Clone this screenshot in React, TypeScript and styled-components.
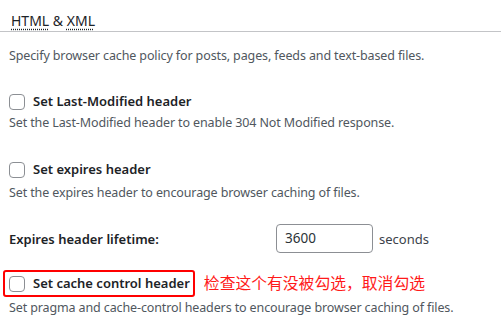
import React from "react";
import styled, { createGlobalStyle } from "styled-components";

const Global = createGlobalStyle`
  html, body { margin: 0; padding: 0; background: #fff; }
  body { font-family: "Noto Sans", "Open Sans", sans-serif; color: #1d2327; }
`;

const Page = styled.div`
  display: flex;
  flex-direction: column;
  width: 501px;
  height: 325px;
  overflow: hidden;
`;

const Heading = styled.h3`
  margin: 0;
  padding: 11px 0 0 11px;
  height: 20px;
  font-size: 14px;
  font-weight: 400;
  line-height: 20px;
  color: #1d2327;
  border-bottom: 1px solid #c3c4c7;
  box-sizing: content-box;
`;

const Abbr = styled.abbr`
  text-decoration: underline dotted;
  text-underline-offset: 3px;
`;

const Desc = styled.p<{ $top: number }>`
  margin: ${(p) => p.$top}px 0 0 9px;
  font-size: 12.5px;
  letter-spacing: -0.12px;
  line-height: 18px;
  color: #50575e;
  white-space: nowrap;
`;

const CheckRow = styled.label<{ $top: number; $highlight?: boolean }>`
  display: flex;
  align-items: center;
  gap: 8px;
  margin-top: ${(p) => p.$top}px;
  margin-left: ${(p) => (p.$highlight ? 3 : 9)}px;
  padding: ${(p) => (p.$highlight ? "2px 3px 2px 4px" : "0")};
  border: ${(p) => (p.$highlight ? "2px solid #ff0000" : "none")};
  border-radius: 3px;
  width: fit-content;
  font-size: 13px;
  font-weight: 600;
  line-height: 19px;
  color: #1d2327;
  cursor: pointer;
`;

const Box = styled.span`
  display: inline-block;
  width: 16px;
  height: 16px;
  box-sizing: border-box;
  border: 1px solid #8c8f94;
  border-radius: 4px;
  background: #fff;
  flex: none;
`;

const HighlightLine = styled.div`
  display: flex;
  align-items: center;
  gap: 9px;
`;

const Note = styled.span`
  font-family: "Noto Sans CJK SC", sans-serif;
  font-size: 15.8px;
  line-height: 20px;
  color: #ff1a1a;
  margin-top: 15px;
`;

const FieldRow = styled.div`
  display: flex;
  align-items: center;
  margin: 22px 0 0 9px;
`;

const FieldLabel = styled.span`
  width: 267px;
  font-size: 13px;
  font-weight: 600;
  color: #1d2327;
`;

const Input = styled.div`
  box-sizing: border-box;
  width: 97px;
  height: 29px;
  border: 1px solid #8c8f94;
  border-radius: 4px;
  padding: 0 8px;
  font-size: 13.5px;
  line-height: 27px;
  color: #2c3338;
`;

const Unit = styled.span`
  margin-left: 6px;
  font-size: 13px;
  color: #3c434a;
`;

export default function App() {
  return (
    <>
      <Global />
      <Page>
        <Heading>
          <Abbr title="Hypertext Markup Language">HTML</Abbr> &amp;{" "}
          <Abbr title="eXtensible Markup Language">XML</Abbr>
        </Heading>
        <Desc $top={15}>Specify browser cache policy for posts, pages, feeds and text-based files.</Desc>
        <CheckRow $top={27}>
          <Box />
          Set Last-Modified header
        </CheckRow>
        <Desc $top={3}>Set the Last-Modified header to enable 304 Not Modified response.</Desc>
        <CheckRow $top={28}>
          <Box />
          Set expires header
        </CheckRow>
        <Desc $top={5}>Set the expires header to encourage browser caching of files.</Desc>
        <FieldRow>
          <FieldLabel>Expires header lifetime:</FieldLabel>
          <Input>3600</Input>
          <Unit>seconds</Unit>
        </FieldRow>
        <HighlightLine>
          <CheckRow $top={17} $highlight>
            <Box />
            Set cache control header
          </CheckRow>
          <Note>检查这个有没被勾选，取消勾选</Note>
        </HighlightLine>
        <Desc $top={2}>Set pragma and cache-control headers to encourage browser caching of files.</Desc>
      </Page>
    </>
  );
}
